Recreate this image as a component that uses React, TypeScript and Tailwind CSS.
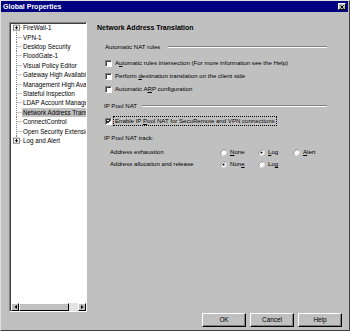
import React from "react";

const treeItems = [
  { label: "FireWall-1", expandable: true },
  { label: "VPN-1" },
  { label: "Desktop Security" },
  { label: "FloodGate-1" },
  { label: "Visual Policy Editor" },
  { label: "Gateway High Availability" },
  { label: "Management High Availability" },
  { label: "Stateful Inspection" },
  { label: "LDAP Account Management" },
  { label: "Network Address Translation", selected: true },
  { label: "ConnectControl" },
  { label: "Open Security Extension" },
  { label: "Log and Alert", expandable: true },
];

const TreeLines = ({
  first,
  last,
  expandable,
}: {
  first?: boolean;
  last?: boolean;
  expandable?: boolean;
}) => (
  <svg width="11" height="9.4" viewBox="0 0 11 9.4" className="shrink-0">
    <line
      x1="5.5"
      x2="5.5"
      y1={first ? 4.7 : 0}
      y2={last ? 4.7 : 9.4}
      stroke="#808080"
      strokeWidth="1"
      strokeDasharray="1 1"
    />
    <line
      x1="5.5"
      x2="11"
      y1="4.7"
      y2="4.7"
      stroke="#808080"
      strokeWidth="1"
      strokeDasharray="1 1"
    />
    {expandable && (
      <g>
        <rect x="2.5" y="2.2" width="6" height="5" fill="#fff" stroke="#808080" strokeWidth="1" />
        <line x1="4" x2="7" y1="4.7" y2="4.7" stroke="#000" strokeWidth="1" />
        <line x1="5.5" x2="5.5" y1="3.2" y2="6.2" stroke="#000" strokeWidth="1" />
      </g>
    )}
  </svg>
);

const Checkbox = ({ checked }: { checked?: boolean }) => (
  <div className="w-[7px] h-[7px] shrink-0 bg-white border border-t-[#808080] border-l-[#808080] border-b-white border-r-white shadow-[inset_1px_1px_0_#404040] flex items-center justify-center">
    {checked && (
      <svg width="5" height="5" viewBox="0 0 5 5">
        <path d="M0.5 2 L2 3.5 L4.5 0.8" stroke="#000" strokeWidth="1.2" fill="none" />
      </svg>
    )}
  </div>
);

const Radio = ({ checked }: { checked?: boolean }) => (
  <svg width="7" height="7" viewBox="0 0 7 7" className="shrink-0">
    <circle cx="3.5" cy="3.5" r="3" fill="#fff" />
    <path d="M1.4 5.6 A3 3 0 0 1 5.6 1.4" stroke="#808080" strokeWidth="1" fill="none" />
    <path d="M5.6 1.4 A3 3 0 0 1 1.4 5.6" stroke="#dfdfdf" strokeWidth="1" fill="none" />
    {checked && <circle cx="3.5" cy="3.5" r="1.1" fill="#000" />}
  </svg>
);

const Separator = ({ className }: { className: string }) => (
  <div className={`flex-1 h-[2px] border-t border-t-[#808080] border-b border-b-white ${className}`}></div>
);

const WinButton = ({ children }: { children: React.ReactNode }) => (
  <button className="w-[44px] h-[14px] bg-[#c0c0c0] border border-t-white border-l-white border-b-black border-r-black shadow-[inset_-1px_-1px_0_#808080] text-[6.4px] leading-none text-black flex items-center justify-center">
    {children}
  </button>
);

const ScrollArrow = ({ dir }: { dir: "left" | "right" }) => (
  <div className="w-[8px] h-[8px] shrink-0 bg-[#c0c0c0] border border-t-white border-l-white border-b-black border-r-black flex items-center justify-center">
    <svg width="3" height="4" viewBox="0 0 3 4">
      {dir === "left" ? <path d="M3 0 L0.5 2 L3 4 Z" fill="#000" /> : <path d="M0 0 L2.5 2 L0 4 Z" fill="#000" />}
    </svg>
  </div>
);

export default function App() {
  return (
    <div className="w-[350px] h-[331px] bg-[#c0c0c0] flex flex-col border border-t-[#dfdfdf] border-l-[#dfdfdf] border-r-[#404040] border-b-[#404040] font-['Liberation_Sans',Arial,sans-serif] text-black overflow-hidden">
      {/* Title bar */}
      <div className="h-[11px] mr-[1px] bg-[#000080] flex items-center justify-between pl-[2px] pr-[2px]">
        <span className="text-[7px] font-bold text-white leading-none">Global Properties</span>
        <div className="w-[8px] h-[7px] bg-[#c0c0c0] border-[0.5px] border-t-white border-l-white border-b-black border-r-black flex items-center justify-center">
          <svg width="4" height="4" viewBox="0 0 4 4">
            <path d="M0.3 0.3 L3.7 3.7 M3.7 0.3 L0.3 3.7" stroke="#000" strokeWidth="1" />
          </svg>
        </div>
      </div>

      {/* Body */}
      <div className="flex pl-[8px] pr-[8px] pt-[10px]">
        {/* Tree */}
        <div className="w-[78px] h-[290px] shrink-0 bg-white border border-t-[#808080] border-l-[#808080] border-b-white border-r-white shadow-[inset_1px_1px_0_#404040] flex flex-col overflow-hidden">
          <div className="flex-1 pl-[1px] pt-[0.3px] overflow-hidden">
            {treeItems.map((item, i) => (
              <div key={item.label} className="h-[9.4px] flex items-center whitespace-nowrap">
                <TreeLines first={i === 0} last={i === treeItems.length - 1} expandable={item.expandable} />
                <span
                  className={`text-[6.3px] leading-[9.4px] h-[9.4px] px-[1px] ${
                    item.selected ? "bg-[#c0c0c0]" : ""
                  }`}
                >
                  {item.label}
                </span>
              </div>
            ))}
          </div>
          <div className="h-[8px] flex pl-[1px]">
            <ScrollArrow dir="left" />
            <div className="w-[50px] h-[8px] bg-[#c0c0c0] border border-t-white border-l-white border-b-black border-r-black"></div>
            <div className="flex-1 bg-[#e3e3e3]"></div>
            <ScrollArrow dir="right" />
          </div>
        </div>

        {/* Right panel */}
        <div className="flex-1 ml-[10px] flex flex-col text-[6.1px] leading-none">
          <div className="h-[10px] flex items-center">
            <span className="text-[7px] font-bold">Network Address Translation</span>
          </div>

          <div className="h-[10px] mt-[10px] flex items-center pl-[8px] pr-[14px]">
            <span>Automatic NAT rules</span>
            <Separator className="ml-[8px]" />
          </div>

          <div className="h-[10px] mt-[6px] flex items-center pl-[8px] gap-[3px]">
            <Checkbox />
            <span>
              A<u>u</u>tomatic rules intersection (For more information see the Help)
            </span>
          </div>
          <div className="h-[10px] mt-[3px] flex items-center pl-[8px] gap-[3px]">
            <Checkbox />
            <span>
              Perform <u>d</u>estination translation on the client side
            </span>
          </div>
          <div className="h-[10px] mt-[3px] flex items-center pl-[8px] gap-[3px]">
            <Checkbox />
            <span>
              Automatic A<u>R</u>P configuration
            </span>
          </div>

          <div className="h-[10px] mt-[7px] flex items-center pl-[7px] pr-[14px]">
            <span>IP Pool NAT</span>
            <Separator className="ml-[5px]" />
          </div>

          <div className="h-[10px] mt-[5px] flex items-center pl-[8px] gap-[1px]">
            <Checkbox checked />
            <span className="border border-dotted border-black px-[1px] py-[0.5px]">
              Enable IP <u>P</u>ool NAT for SecuRemote and VPN connections
            </span>
          </div>

          <div className="h-[10px] mt-[7px] flex items-center pl-[7px]">
            <span>IP Pool NAT track:</span>
          </div>

          <div className="h-[10px] mt-[4px] flex items-center pl-[13px]">
            <span className="w-[110px] shrink-0">Address exhaustion</span>
            <div className="w-[38px] flex items-center gap-[3px]">
              <Radio />
              <span>
                <u>N</u>one
              </span>
            </div>
            <div className="w-[35px] flex items-center gap-[3px]">
              <Radio checked />
              <span>
                <u>L</u>og
              </span>
            </div>
            <div className="flex items-center gap-[3px]">
              <Radio />
              <span>
                <u>A</u>lert
              </span>
            </div>
          </div>

          <div className="h-[10px] mt-[2px] flex items-center pl-[13px]">
            <span className="w-[110px] shrink-0">Address allocation and release</span>
            <div className="w-[38px] flex items-center gap-[3px]">
              <Radio checked />
              <span>
                Non<u>e</u>
              </span>
            </div>
            <div className="flex items-center gap-[3px]">
              <Radio />
              <span>
                Lo<u>g</u>
              </span>
            </div>
          </div>
        </div>
      </div>

      {/* Buttons */}
      <div className="flex justify-end gap-[4px] pr-[7px] mt-[1px]">
        <WinButton>OK</WinButton>
        <WinButton>Cancel</WinButton>
        <WinButton>Help</WinButton>
      </div>
    </div>
  );
}
